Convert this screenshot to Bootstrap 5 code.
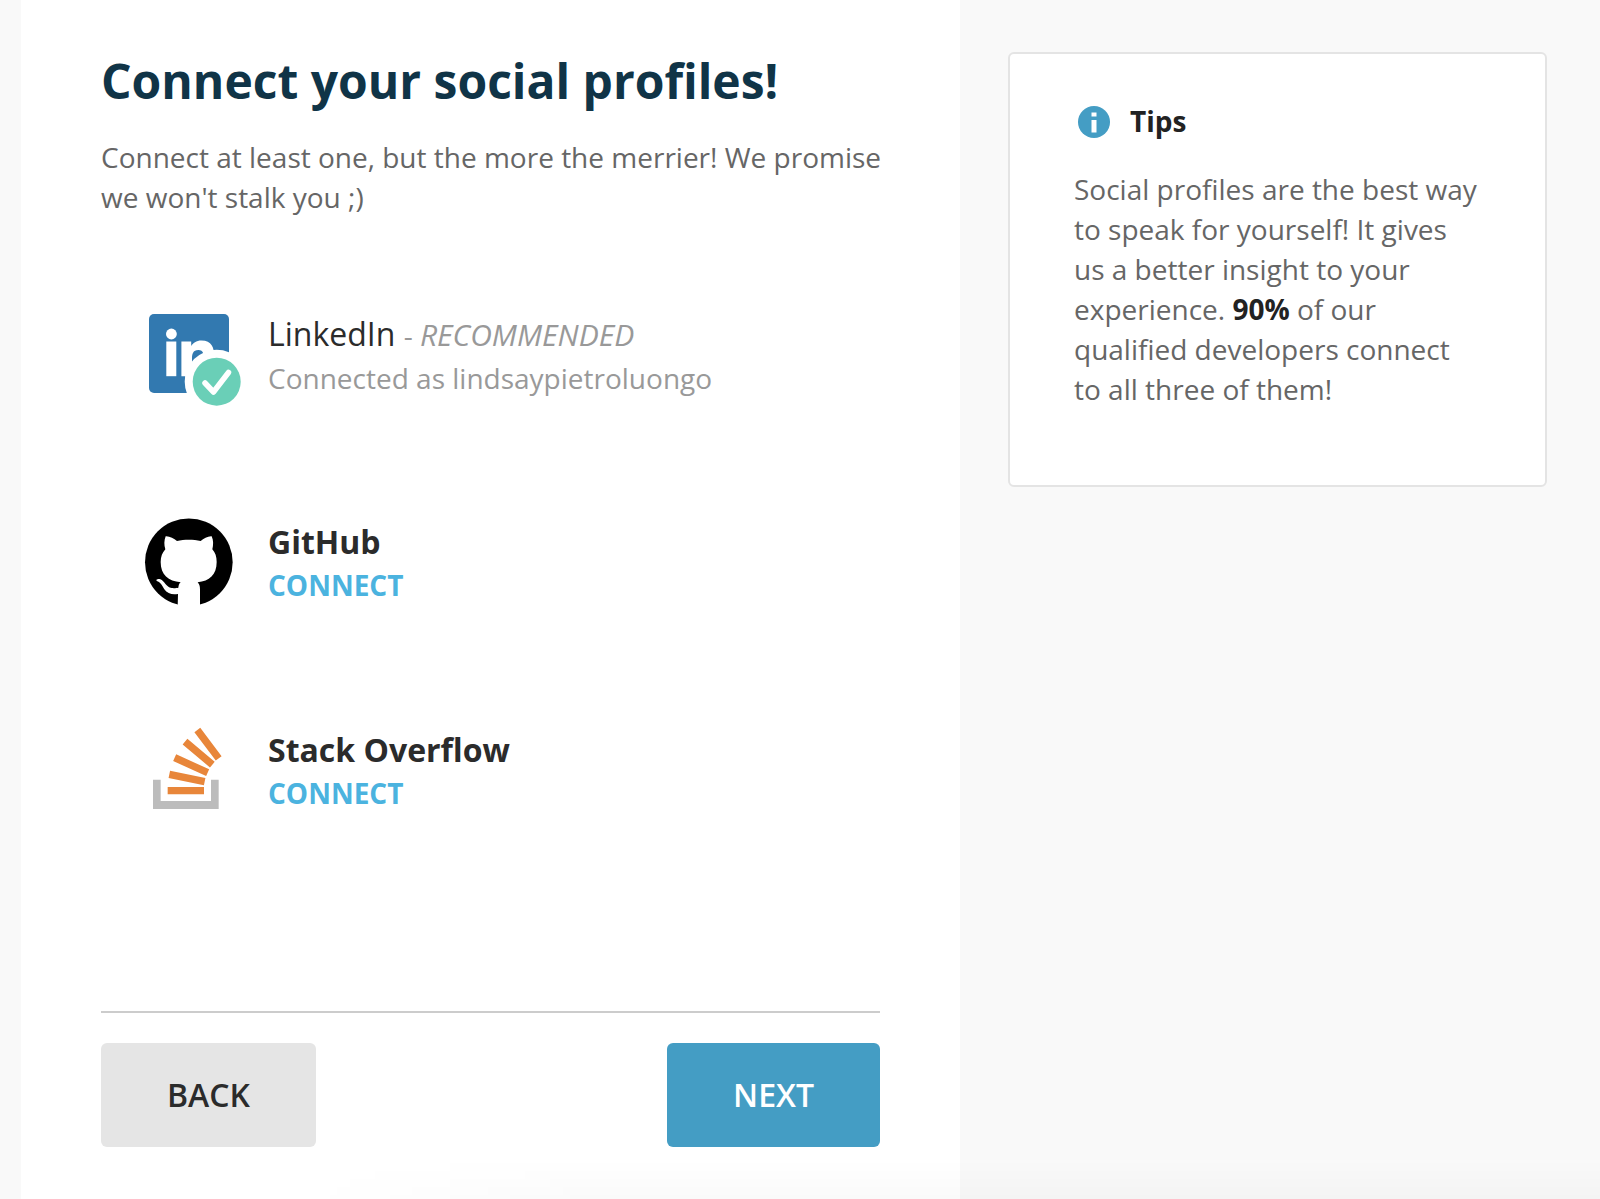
<!DOCTYPE html>
<html lang="en">
<head>
<meta charset="utf-8">
<meta name="viewport" content="width=device-width, initial-scale=1">
<title>Connect your social profiles</title>
<link href="https://cdn.jsdelivr.net/npm/bootstrap@5.3.0/dist/css/bootstrap.min.css" rel="stylesheet">
<style>
body { background: #f9f9f9; color: #666; font-family: "Open Sans", "Noto Sans", sans-serif; font-size: 28px; line-height: 40px; }
.page-grid { grid-template-columns: minmax(0, 939fr) minmax(0, 539fr); min-height: 100vh; gap: 48px; padding: 0 53px 0 21px; }
.step-panel { padding: 49px 72px 47px 80px; }
.tips-column { padding-top: 52px; }
.step-title { color: #103447; font-size: 48px; line-height: 64px; font-weight: 700; margin-bottom: 24px; }
.profiles { gap: 96px; margin: 80px 0 0; padding-left: 40px; }
.profile { gap: 27px; }
.profile-icon { width: 100px; height: 112px; }
.profile-text { padding-top: 2px; }
.profile-name { color: #2b2b2b; font-size: 32px; line-height: 46px; }
.profile-note { color: #999; font-size: 28px; }
.profile-tag { font-size: 30px; }
.connect-link { color: #4bb3df; font-weight: 700; }
.step-actions { border-top: 2px solid #ccc; margin: 186px 8px 0 0; padding-top: 30px; }
.step-btn { --bs-btn-padding-x: 66px; --bs-btn-padding-y: 30px; --bs-btn-font-size: 32px; --bs-btn-line-height: 44px; --bs-btn-font-weight: 600; --bs-btn-border-width: 0; --bs-btn-border-radius: 6px; }
.back-btn { --bs-btn-color: #2b2b2b; --bs-btn-bg: #e5e5e5; --bs-btn-hover-bg: #d9d9d9; }
.next-btn { --bs-btn-color: #fff; --bs-btn-bg: #449dc4; --bs-btn-hover-color: #fff; --bs-btn-hover-bg: #378bb0; }
.tips-card { border: 2px solid #e4e4e4; border-radius: 6px; padding: 47px 64px 76px; }
.tips-title { color: #222; font-size: 28px; line-height: 40px; font-weight: 700; }
.tips-head { gap: 16px; margin-bottom: 28px; }
.tips-card strong { color: #222; font-weight: 700; }
.bottom-fade { height: 40px; left: 300px; background: linear-gradient(to bottom, transparent, rgba(0,0,0,.02)); -webkit-mask-image: linear-gradient(to right, transparent, #000 300px); mask-image: linear-gradient(to right, transparent, #000 300px); pointer-events: none; }
@media (max-width: 1100px) { .page-grid { grid-template-columns: minmax(0, 1fr); padding: 0; } .step-panel, .tips-column { padding: 32px 24px; } .profiles { padding-left: 0; } }
</style>
<script src="https://cdn.jsdelivr.net/npm/bootstrap@5.3.0/dist/js/bootstrap.bundle.min.js"></script>
</head>
<body>
<div class="page-grid d-grid">
  <main class="step-panel bg-white">
    <h1 class="step-title">Connect your social profiles!</h1>
    <p class="mb-0">Connect at least one, but the more the merrier! We promise we won't stalk you ;)</p>

    <ul class="profiles list-unstyled d-flex flex-column">
      <li class="profile d-flex align-items-center">
        <svg class="profile-icon flex-shrink-0" viewBox="0 0 100 112" aria-hidden="true">
          <rect x="8" y="17" width="80" height="79" rx="5" fill="#3279b0"/>
          <g fill="#fff">
            <circle cx="30.4" cy="37" r="5.4"/>
            <path d="M25.3 44.500h10v34.700h-10z"/>
            <path d="M40.4 44.500h9.8v4.500c1.600-3 5.200-5.500 10.200-5.500 10.400 0 12.800 7 12.800 16v19.700H63V62c0-4-.4-9-5.600-9-5.600 0-6.400 4.300-6.400 8.700v17.500H40.400z"/>
            <circle cx="75.700" cy="84.700" r="32"/>
          </g>
          <circle cx="75.700" cy="84.700" r="24" fill="#6acfb7"/>
          <path d="M64 86l8.500 9L87.500 75.500" fill="none" stroke="#fff" stroke-width="5.500" stroke-linecap="round" stroke-linejoin="round"/>
        </svg>
        <div class="profile-text">
          <div class="profile-name">LinkedIn <span class="profile-note">- <em class="profile-tag">RECOMMENDED</em></span></div>
          <div class="profile-note">Connected as lindsaypietroluongo</div>
        </div>
      </li>
      <li class="profile d-flex align-items-center">
        <svg class="profile-icon flex-shrink-0" viewBox="0 0 100 112" aria-hidden="true">
          <g transform="translate(-11 -5) scale(.33333)">
            <circle cx="176.500" cy="187" r="131.500"/>
            <path fill="#fff" d="M143 322L144 282C128 285 112 282 103 268C97 257 92 247 80 243C77 238 84 236 91 238C104 243 108 262 125 264C132 265 140 264 145 263C146 256 147 251 152 247C115 243 92 225 92 186C92 170 97 158 106 148C102 136 102 121 107 109C118 108 132 116 141 123C163 118 190 118 212 123C221 116 234 108 245 109C251 122 250 136 247 148C256 158 260 170 260 186C260 225 238 243 203 247C208 253 210 258 210 268L210 322Z"/>
          </g>
        </svg>
        <div class="profile-text">
          <div class="profile-name fw-bold">GitHub</div>
          <a class="connect-link text-decoration-none d-block" href="#github">CONNECT</a>
        </div>
      </li>
      <li class="profile d-flex align-items-center">
        <svg class="profile-icon flex-shrink-0" viewBox="0 0 100 112" aria-hidden="true">
          <g transform="translate(-11 -3) scale(.33333)">
            <path fill="#bcbcbc" d="M69 209h23v64h151v-64h23v88H69z"/>
            <path fill="none" stroke="#e8863a" stroke-width="22" d="M113 242H222M118 193L224 215M134 143L233 188M165 95L247 164M202 60L266 145"/>
          </g>
        </svg>
        <div class="profile-text">
          <div class="profile-name fw-bold">Stack Overflow</div>
          <a class="connect-link text-decoration-none d-block" href="#stack-overflow">CONNECT</a>
        </div>
      </li>
    </ul>

    <div class="step-actions d-flex justify-content-between">
      <button type="button" class="btn step-btn back-btn">BACK</button>
      <button type="button" class="btn step-btn next-btn">NEXT</button>
    </div>
  </main>

  <aside class="tips-column">
    <section class="tips-card bg-white">
      <div class="tips-head d-flex align-items-center">
        <svg width="40" height="40" viewBox="0 0 40 40" aria-hidden="true">
          <circle cx="20" cy="21" r="16" fill="#449dc4"/>
          <path fill="#fff" d="M17.500 11.500h5v4h-5zM17.500 19h5v12.500h-5z"/>
        </svg>
        <h2 class="tips-title mb-0">Tips</h2>
      </div>
      <p class="mb-0">Social profiles are the best way to speak for yourself! It gives us a better insight to your experience. <strong>90%</strong> of our qualified developers connect to all three of them!</p>
    </section>
  </aside>
</div>
<div class="bottom-fade position-fixed bottom-0 end-0"></div>
</body>
</html>
